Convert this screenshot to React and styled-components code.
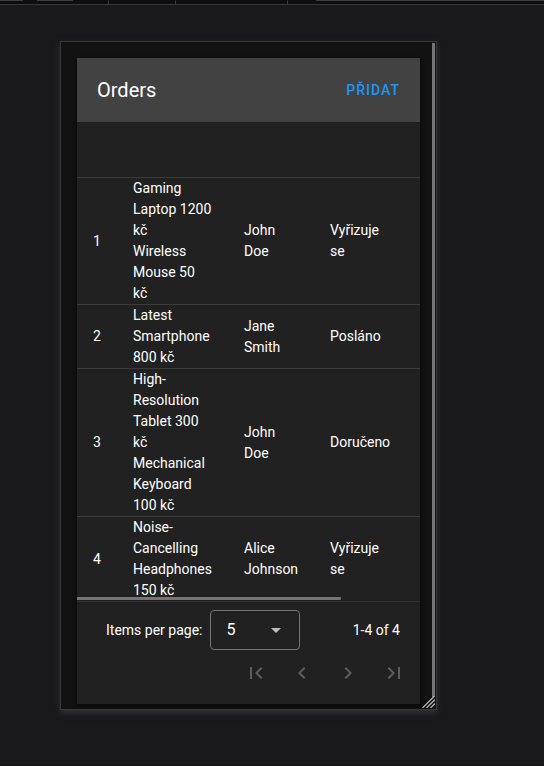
import React from "react";
import styled, { createGlobalStyle } from "styled-components";

const GlobalStyle = createGlobalStyle`
  *, *::before, *::after { box-sizing: border-box; }
  body {
    margin: 0;
    background: #19191b;
    color: #fff;
    font-family: Roboto, "Liberation Sans", sans-serif;
    font-size: 14px;
    line-height: 21px;
  }
`;

const Page = styled.div`
  display: flex;
  flex-direction: column;
  min-height: 100vh;
  border-bottom: 1px solid #131315;
`;

const TabStrip = styled.div`
  display: flex;
  height: 5px;
  background: #0e0e0e;
  border-bottom: 1px solid #37373b;
`;

const TabSlot = styled.div`
  flex: ${(p) => (p.$width ? `0 0 ${p.$width}px` : "1")};
  border-top: 1px solid ${(p) => (p.$line ? "#3c3c42" : "transparent")};
  border-right: ${(p) => (p.$divider ? "1px solid #3c3c42" : "none")};
`;

const Stage = styled.main`
  flex: 1;
  padding: 36px 107px 55px 60px;
`;

const Frame = styled.div`
  position: relative;
  display: flex;
  border: 1px solid #39393c;
  background: #121212;
  box-shadow: 0 3px 6px #343437;
`;

const FrameContent = styled.div`
  flex: 1;
  min-width: 0;
  padding: 16px 12px 5px 16px;
`;

const VerticalTrack = styled.div`
  width: 4px;
  padding: 1px 1px 12px 0;
  display: flex;
`;

const VerticalThumb = styled.div`
  flex: 1;
  background: #757575;
`;

const ResizeGrip = styled.svg`
  position: absolute;
  right: 1px;
  bottom: 1px;
  width: 13px;
  height: 12px;
  display: block;
`;

const Card = styled.section`
  background: #212121;
  box-shadow: 0 2px 4px #080808;
`;

const Toolbar = styled.header`
  display: flex;
  align-items: center;
  justify-content: space-between;
  height: 64px;
  padding: 0 12px 0 20px;
  background: #424242;
`;

const Title = styled.h1`
  margin: 0;
  font-size: 20px;
  line-height: 24px;
  font-weight: 400;
`;

const AddButton = styled.button`
  height: 36px;
  padding: 0 8px;
  border: 0;
  background: none;
  color: #2196f3;
  font: 500 14px/20px Roboto, "Liberation Sans", sans-serif;
  letter-spacing: 1px;
  text-transform: uppercase;
`;

const TableWrap = styled.div`
  position: relative;
  overflow: hidden;
`;

const OrdersTable = styled.table`
  width: 447px;
  table-layout: fixed;
  border-collapse: separate;
  border-spacing: 0;
`;

const HeadCell = styled.th`
  height: 56px;
  padding: 0 16px;
  border-bottom: 1px solid #3c3c3c;
`;

const Cell = styled.td`
  padding: 0 16px;
  text-align: left;
  vertical-align: middle;

  tr:not(:last-child) > & {
    border-bottom: 1px solid #3c3c3c;
  }
`;

const HorizontalThumb = styled.div`
  position: absolute;
  left: 0;
  bottom: 1px;
  width: 77%;
  height: 3px;
  border-radius: 0 1px 1px 0;
  background: #757575;
`;

const Footer = styled.footer`
  border-top: 1px solid #303030;
  padding: 8px 8px 13px;
`;

const FooterRow = styled.div`
  display: flex;
  align-items: center;
  justify-content: space-between;
  padding: 0 12px 0 21px;
`;

const SizeLabel = styled.label`
  display: flex;
  align-items: center;
  gap: 8px;
`;

const SelectBox = styled.span`
  display: grid;
  grid-template-columns: 1fr 24px;
  align-items: center;
  width: 90px;
`;

const Select = styled.select`
  grid-area: 1 / 1 / 2 / 3;
  height: 40px;
  padding: 0 15px;
  border: 1px solid #757575;
  border-radius: 4px;
  background: none;
  color: #fff;
  font: 400 16px/24px Roboto, "Liberation Sans", sans-serif;
  appearance: none;

  option { background: #212121; }
`;

const Arrow = styled.svg`
  grid-area: 1 / 1 / 2 / 3;
  justify-self: end;
  width: 24px;
  height: 24px;
  margin-right: 12px;
  fill: #bdbdbd;
  pointer-events: none;
`;

const Pager = styled.nav`
  display: flex;
  justify-content: flex-end;
  gap: 10px;
  margin-top: 5px;
`;

const PagerButton = styled.button`
  display: flex;
  align-items: center;
  justify-content: center;
  width: 36px;
  height: 36px;
  padding: 0;
  border: 0;
  background: none;

  svg {
    width: 24px;
    height: 24px;
    fill: #5d5d5d;
  }
`;

const orders = [
  { id: 1, items: ["Gaming Laptop 1200 kč", "Wireless Mouse 50 kč"], customer: "John Doe", status: "Vyřizuje se" },
  { id: 2, items: ["Latest Smartphone 800 kč"], customer: "Jane Smith", status: "Posláno" },
  { id: 3, items: ["High-Resolution Tablet 300 kč", "Mechanical Keyboard 100 kč"], customer: "John Doe", status: "Doručeno" },
  { id: 4, items: ["Noise-Cancelling Headphones 150 kč"], customer: "Alice Johnson", status: "Vyřizuje se" },
];

const pagerActions = [
  { label: "First page", path: "M18.41,16.59L13.82,12L18.41,7.41L17,6L11,12L17,18L18.41,16.59M6,6H8V18H6V6Z" },
  { label: "Previous page", path: "M15.41,16.58L10.83,12L15.41,7.41L14,6L8,12L14,18L15.41,16.58Z" },
  { label: "Next page", path: "M8.59,16.58L13.17,12L8.59,7.41L10,6L16,12L10,18L8.59,16.58Z" },
  { label: "Last page", path: "M5.59,7.41L10.18,12L5.59,16.59L7,18L13,12L7,6L5.59,7.41M16,6H18V18H16V6Z" },
];

export default function App() {
  return (
    <Page>
      <GlobalStyle />
      <TabStrip>
        <TabSlot $width={23} $line />
        <TabSlot $width={14} />
        <TabSlot $width={36} $line />
        <TabSlot $width={36} $divider />
        <TabSlot $width={67} $divider />
        <TabSlot $width={112} $divider />
        <TabSlot $width={28} />
        <TabSlot $line />
      </TabStrip>
      <Stage>
        <Frame>
          <FrameContent>
            <Card>
              <Toolbar>
                <Title>Orders</Title>
                <AddButton type="button">Přidat</AddButton>
              </Toolbar>
              <TableWrap>
                <OrdersTable>
                  <colgroup>
                    <col width="40" />
                    <col width="111" />
                    <col width="86" />
                    <col width="92" />
                    <col width="118" />
                  </colgroup>
                  <thead>
                    <tr>
                      <HeadCell />
                      <HeadCell />
                      <HeadCell />
                      <HeadCell />
                      <HeadCell />
                    </tr>
                  </thead>
                  <tbody>
                    {orders.map((order) => (
                      <tr key={order.id}>
                        <Cell>{order.id}</Cell>
                        <Cell>
                          {order.items.map((item) => (
                            <div key={item}>{item}</div>
                          ))}
                        </Cell>
                        <Cell>{order.customer}</Cell>
                        <Cell>{order.status}</Cell>
                        <Cell />
                      </tr>
                    ))}
                  </tbody>
                </OrdersTable>
                <HorizontalThumb />
              </TableWrap>
              <Footer>
                <FooterRow>
                  <SizeLabel>
                    Items per page:
                    <SelectBox>
                      <Select defaultValue="5">
                        <option>5</option>
                        <option>10</option>
                        <option>25</option>
                      </Select>
                      <Arrow viewBox="0 0 24 24" aria-hidden="true">
                        <path d="M7,10L12,15L17,10H7Z" />
                      </Arrow>
                    </SelectBox>
                  </SizeLabel>
                  <span>1-4 of 4</span>
                </FooterRow>
                <Pager aria-label="Pagination">
                  {pagerActions.map((action) => (
                    <PagerButton key={action.label} type="button" aria-label={action.label} disabled>
                      <svg viewBox="0 0 24 24" aria-hidden="true">
                        <path d={action.path} />
                      </svg>
                    </PagerButton>
                  ))}
                </Pager>
              </Footer>
            </Card>
          </FrameContent>
          <VerticalTrack>
            <VerticalThumb />
          </VerticalTrack>
          <ResizeGrip viewBox="0 0 13 12" aria-hidden="true">
            <path d="M0.5 12L12.5 0M4.5 12L13 3.5M8.5 12L13 7.5" stroke="#b5b5b5" strokeWidth="1.3" fill="none" />
          </ResizeGrip>
        </Frame>
      </Stage>
    </Page>
  );
}
